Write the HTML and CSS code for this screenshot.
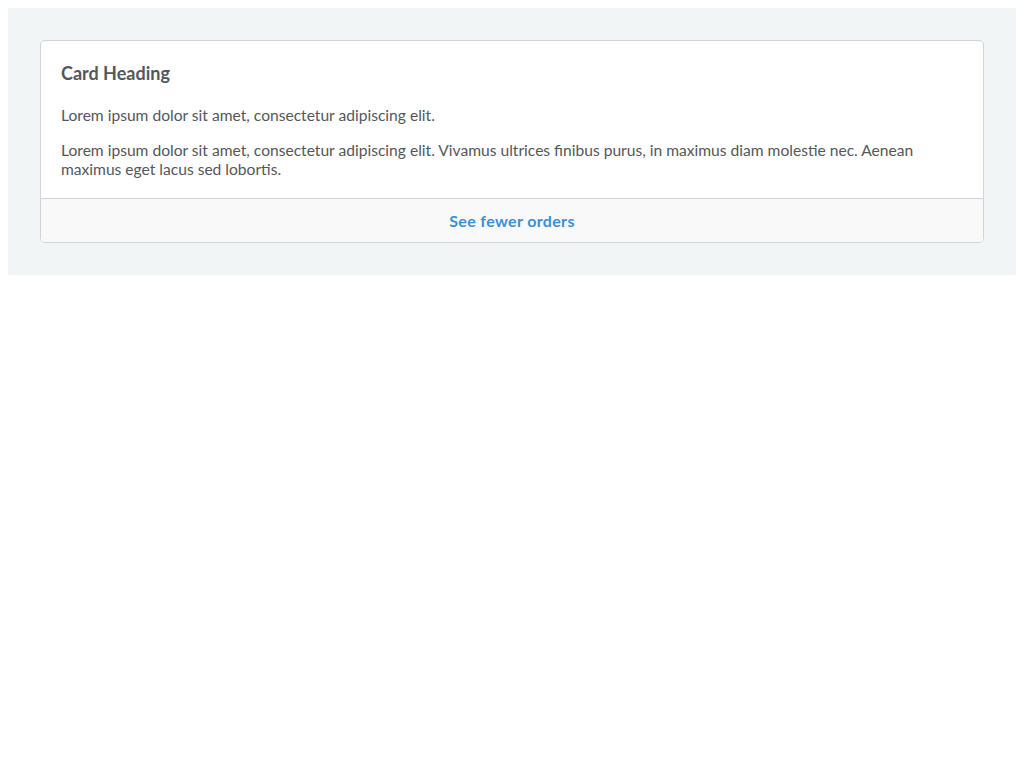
FILE: index.html
```html
<!DOCTYPE html>
<html>
<head>
<meta charset="utf-8">
<link rel="stylesheet" href="styles.css">
</head>
<body>
<div class="wrap">
  <div class="card">
    <div class="card-body">
      <h2 class="card-heading">Card Heading</h2>
      <p class="card-text">Lorem ipsum dolor sit amet, consectetur adipiscing elit.</p>
      <p class="card-text">Lorem ipsum dolor sit amet, consectetur adipiscing elit. Vivamus ultrices finibus purus, in maximus diam molestie nec. Aenean maximus eget lacus sed lobortis.</p>
    </div>
    <div class="card-footer">
      <a class="card-link" href="#">See fewer orders</a>
    </div>
  </div>
</div>
</body>
</html>
```
FILE: styles.css
```css
body {
  margin: 8px;
  font-family: Lato, "Open Sans", sans-serif;
  color: #54575c;
}
.wrap {
  background: #f2f5f6;
  padding: 32px;
}
.card {
  background: #fff;
  border: 1px solid #cfd4d9;
  border-radius: 5px;
  overflow: hidden;
}
.card-body {
  padding: 21px 20px 19px;
}
.card-heading {
  margin: 0 0 22px;
  font-size: 18px;
  line-height: 22px;
  font-weight: 700;
  color: #54575c;
}
.card-text {
  margin: 0 0 16px;
  font-size: 15.6px;
  line-height: 19px;
}
.card-text:last-child {
  margin-bottom: 0;
}
.card-footer {
  background: #f9f9f9;
  border-top: 1px solid #cfd4d9;
  padding: 12px 20px 11px;
  text-align: center;
}
.card-link {
  font-size: 16px;
  line-height: 20px;
  font-weight: 700;
  letter-spacing: 0.35px;
  color: #3b8fd9;
  text-decoration: none;
}
```
